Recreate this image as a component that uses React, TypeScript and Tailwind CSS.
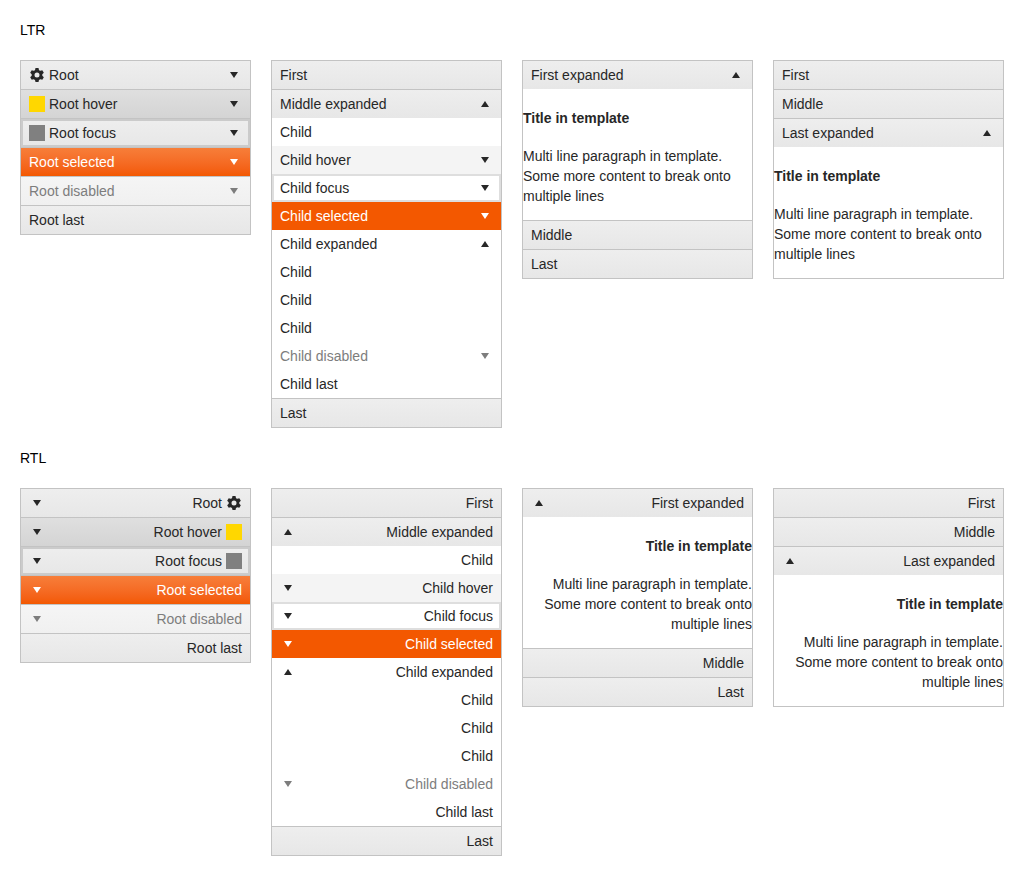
import React from "react";
import clsx from "clsx";

type State = "normal" | "hover" | "focus" | "selected" | "disabled";
type IconName = "gear" | "yellow" | "gray";

interface Item {
  text: string;
  state?: State;
  arrow?: "up" | "down";
  icon?: IconName;
  items?: Item[];
  template?: boolean;
}

const panels: Item[][] = [
  [
    { text: "Root", icon: "gear", arrow: "down" },
    { text: "Root hover", icon: "yellow", arrow: "down", state: "hover" },
    { text: "Root focus", icon: "gray", arrow: "down", state: "focus" },
    { text: "Root selected", arrow: "down", state: "selected" },
    { text: "Root disabled", arrow: "down", state: "disabled" },
    { text: "Root last" },
  ],
  [
    { text: "First" },
    {
      text: "Middle expanded",
      arrow: "up",
      items: [
        { text: "Child" },
        { text: "Child hover", arrow: "down", state: "hover" },
        { text: "Child focus", arrow: "down", state: "focus" },
        { text: "Child selected", arrow: "down", state: "selected" },
        {
          text: "Child expanded",
          arrow: "up",
          items: [{ text: "Child" }, { text: "Child" }, { text: "Child" }],
        },
        { text: "Child disabled", arrow: "down", state: "disabled" },
        { text: "Child last" },
      ],
    },
    { text: "Last" },
  ],
  [
    { text: "First expanded", arrow: "up", template: true },
    { text: "Middle" },
    { text: "Last" },
  ],
  [
    { text: "First" },
    { text: "Middle" },
    { text: "Last expanded", arrow: "up", template: true },
  ],
];

const rootStyles: Record<State, string> = {
  normal: "bg-linear-to-b from-[#eeeeee] to-[#e7e7e7]",
  hover: "bg-linear-to-b from-[#dfdfdf] to-[#d4d4d4]",
  focus:
    "bg-linear-to-b from-[#eeeeee] to-[#e7e7e7] shadow-[inset_0_0_0_2px_#cbcbcb]",
  selected: "bg-linear-to-b from-[#f77e39] to-[#f35800] text-white",
  disabled: "bg-linear-to-b from-[#f5f5f5] to-[#f0f0f0] text-[#7d7d7d]",
};

const childStyles: Record<State, string> = {
  normal: "bg-white",
  hover: "bg-[#f4f4f4]",
  focus: "bg-white shadow-[inset_0_0_0_2px_#dedede]",
  selected: "bg-[#f35800] text-white",
  disabled: "bg-white text-[#7d7d7d]",
};

const toothAngles = [0, 60, 120, 180, 240, 300];

function Gear() {
  return (
    <svg viewBox="-8 -8 16 16" className="size-4 shrink-0 fill-current" aria-hidden="true">
      <circle r="3.9" fill="none" stroke="currentColor" strokeWidth="2.8" />
      {toothAngles.map((angle) => (
        <path key={angle} d="M-2.2-4l.7-3h3l.7 3z" transform={`rotate(${angle})`} />
      ))}
    </svg>
  );
}

function ItemIcon({ name }: { name: IconName }) {
  if (name === "gear") return <Gear />;
  return (
    <span
      className={clsx("size-4 shrink-0", name === "yellow" ? "bg-[#ffd700]" : "bg-[#808080]")}
    />
  );
}

function Arrow({ direction }: { direction: "up" | "down" }) {
  return (
    <svg viewBox="0 0 16 16" className="ms-auto size-4 shrink-0 fill-current" aria-hidden="true">
      <path d={direction === "down" ? "M4 5h8l-4 6z" : "M4 11h8l-4-6z"} />
    </svg>
  );
}

function Template() {
  return (
    <div className="pt-[19px] pb-3.5">
      <h4 className="mb-[18px] font-bold">Title in template</h4>
      <p>Multi line paragraph in template. Some more content to break onto multiple lines</p>
    </div>
  );
}

function PanelItem({ item, root = false }: { item: Item; root?: boolean }) {
  const state = item.state ?? "normal";
  return (
    <li className={clsx(root && "border-t border-[#c3c3c3] first:border-t-0")}>
      <button
        type="button"
        disabled={state === "disabled"}
        aria-expanded={item.arrow ? item.arrow === "up" : undefined}
        className={clsx(
          "flex w-full items-center gap-1 px-2 py-1 text-start",
          root ? rootStyles[state] : childStyles[state],
        )}
      >
        {item.icon && <ItemIcon name={item.icon} />}
        <span>{item.text}</span>
        {item.arrow && <Arrow direction={item.arrow} />}
      </button>
      {item.items && (
        <ul>
          {item.items.map((child, i) => (
            <PanelItem key={i} item={child} />
          ))}
        </ul>
      )}
      {item.template && <Template />}
    </li>
  );
}

function Section({ title, dir }: { title: string; dir: "ltr" | "rtl" }) {
  return (
    <section className="flex flex-col gap-5">
      <h2 className="text-black">{title}</h2>
      <div className="grid grid-cols-4 items-start gap-5">
        {panels.map((items, i) => (
          <ul key={i} dir={dir} className="border border-[#c3c3c3] bg-white">
            {items.map((item) => (
              <PanelItem key={item.text} item={item} root />
            ))}
          </ul>
        ))}
      </div>
    </section>
  );
}

export default function App() {
  return (
    <main className="flex flex-col gap-5 p-5 font-['Liberation_Sans',Arial,sans-serif] text-sm/5 text-[#272727]">
      <Section title="LTR" dir="ltr" />
      <Section title="RTL" dir="rtl" />
    </main>
  );
}
